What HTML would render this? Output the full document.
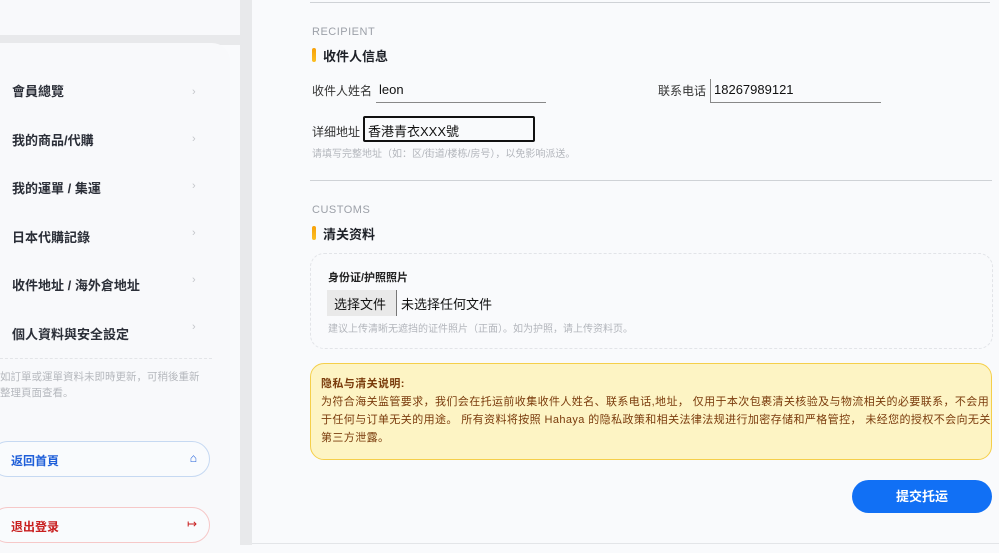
<!DOCTYPE html>
<html><head><meta charset="utf-8"><style>
*{margin:0;padding:0;box-sizing:border-box}
body{width:999px;height:545px;overflow:hidden;background:#f9fafc;font-family:"Liberation Sans","Noto Sans CJK SC",sans-serif;position:relative}
.abs{position:absolute}
.strip{left:240px;top:0;width:12px;height:545px;background:#e8e9eb}
.sidetop{left:0;top:0;width:240px;height:35px;background:#f8f9fb}
.sidegap{left:0;top:35px;width:240px;height:10px;background:#e8e9eb}
.card{left:0;top:43px;width:230px;height:510px;background:#f8f9fb;border-top-right-radius:18px}
.nav{left:12px;font-size:13px;font-weight:bold;color:#2b2f38}
.chev{left:192px;font-size:11px;color:#c4c6ca;line-height:17px}
.btn{left:-10px;width:220px;height:36px;border-radius:18px;background:#f9fbfd;font-size:12px;font-weight:bold}
.sec{font-size:11px;color:#9ca0a8;letter-spacing:.5px;left:312px}
.h{left:312px;font-size:13px;font-weight:bold;color:#1e2128;padding-left:11px}
.h:before{content:"";position:absolute;left:0;top:2px;width:4px;height:14px;border-radius:2px;background:linear-gradient(#f7a10a,#fbbf24)}
.lbl{font-size:12px;color:#333}
.hint{font-size:10px;color:#b3b6bc}
</style></head><body>
<div class="abs sidetop"></div>
<div class="abs sidegap"></div>
<div class="abs strip"></div>
<div class="abs card"></div>
<div class="abs nav" style="top:81px">會員總覽</div><div class="abs chev" style="top:84px">›</div>
<div class="abs nav" style="top:130px">我的商品/代購</div><div class="abs chev" style="top:131px">›</div>
<div class="abs nav" style="top:178px">我的運單 / 集運</div><div class="abs chev" style="top:178px">›</div>
<div class="abs nav" style="top:227px">日本代購記錄</div><div class="abs chev" style="top:225px">›</div>
<div class="abs nav" style="top:275px">收件地址 / 海外倉地址</div><div class="abs chev" style="top:272px">›</div>
<div class="abs nav" style="top:324px">個人資料與安全設定</div><div class="abs chev" style="top:319px">›</div>
<div class="abs" style="left:0;top:358px;width:212px;border-top:1px dashed #e3e5e8"></div>
<div class="abs" style="left:0;top:369px;width:210px;font-size:10.5px;line-height:16px;color:#b5b8bd;white-space:nowrap">如訂單或運單資料未即時更新，可稍後重新<br>整理頁面查看。</div>
<div class="abs btn" style="top:441px;border:1px solid #c6d9f2;color:#1f5fd9"><span style="position:absolute;left:20px;top:10px">返回首頁</span><span style="position:absolute;right:12px;top:9px;font-weight:normal">⌂</span></div>
<div class="abs btn" style="top:507px;border:1px solid #f6c8c8;color:#c81e1e"><span style="position:absolute;left:20px;top:10px">退出登录</span><span style="position:absolute;right:12px;top:9px;font-weight:normal">↦</span></div>

<div class="abs" style="left:310px;top:2px;width:680px;border-top:1px solid #cfd2d6"></div>
<div class="abs sec" style="top:26px">RECIPIENT</div>
<div class="abs h" style="top:46px">收件人信息</div>
<div class="abs lbl" style="left:312px;top:82px">收件人姓名</div>
<div class="abs" style="left:376px;top:79px;width:170px;height:24px;border-bottom:1px solid #888;font-size:13px;padding:3px 3px;color:#111">leon</div>
<div class="abs lbl" style="left:658px;top:82px">联系电话</div>
<div class="abs" style="left:710px;top:79px;width:171px;height:24px;border-bottom:1px solid #888;border-left:1px solid #888;font-size:13px;padding:3px 3px;color:#111">18267989121</div>
<div class="abs lbl" style="left:312px;top:123px">详细地址</div>
<div class="abs" style="left:363px;top:116px;width:172px;height:26px;border:2px solid #111;border-radius:2px;font-size:13px;padding:3px 3px;color:#111">香港青衣XXX號</div>
<div class="abs hint" style="left:312px;top:145px">请填写完整地址（如：区/街道/楼栋/房号），以免影响派送。</div>
<div class="abs" style="left:310px;top:180px;width:682px;border-top:1px solid #cfd2d6"></div>
<div class="abs sec" style="top:204px">CUSTOMS</div>
<div class="abs h" style="top:224px">清关资料</div>
<div class="abs" style="left:310px;top:253px;width:683px;height:96px;border:1px dashed #e2e4e8;border-radius:14px"></div>
<div class="abs" style="left:328px;top:269px;font-size:11px;font-weight:bold;color:#222">身份证/护照照片</div>
<div class="abs" style="left:327px;top:290px;width:70px;height:26px;background:#e9e9e9;border-right:1px solid #777;font-size:13px;padding:4px 7px;color:#111">选择文件</div>
<div class="abs" style="left:401px;top:294px;font-size:13px;color:#111">未选择任何文件</div>
<div class="abs hint" style="left:328px;top:320px">建议上传清晰无遮挡的证件照片（正面）。如为护照，请上传资料页。</div>
<div class="abs" style="left:310px;top:363px;width:682px;height:97px;background:#fdf4c4;border:1px solid #f5cf4a;border-radius:14px;padding:11px 0 0 10px;font-size:11px;line-height:18px;color:#7a3b0c;white-space:nowrap;letter-spacing:0.4px">
<b>隐私与清关说明:</b><br>为符合海关监管要求，我们会在托运前收集收件人姓名、联系电话,地址， 仅用于本次包裹清关核验及与物流相关的必要联系，不会用<br>于任何与订单无关的用途。 所有资料将按照 Hahaya 的隐私政策和相关法律法规进行加密存储和严格管控， 未经您的授权不会向无关<br>第三方泄露。</div>
<div class="abs" style="left:852px;top:480px;width:140px;height:33px;border-radius:17px;background:#1170f5;color:#fff;font-size:13px;font-weight:bold;text-align:center;line-height:33px">提交托运</div>
<div class="abs" style="left:252px;top:543px;width:747px;border-top:1px solid #e3e5e8"></div>
</body></html>
